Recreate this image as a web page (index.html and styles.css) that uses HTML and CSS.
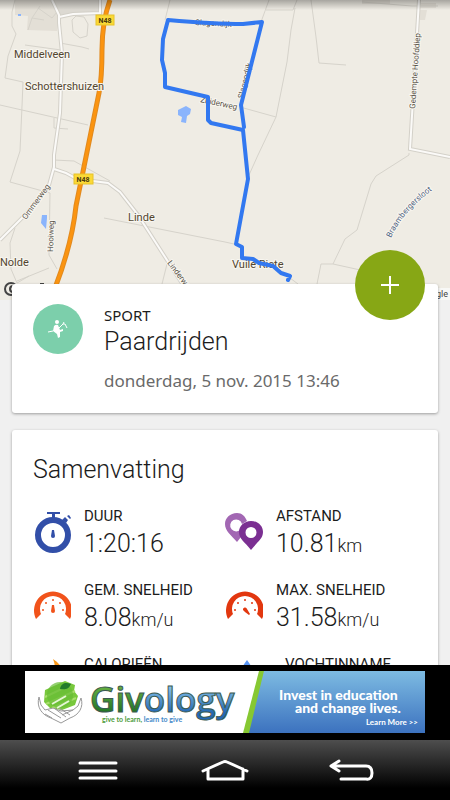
FILE: index.html
```html
<!DOCTYPE html>
<html lang="nl">
<head>
    <meta charset="UTF-8">
    <meta name="viewport" content="width=device-width, initial-scale=1.0">
    <title>Paardrijden</title>
    <link rel="stylesheet" href="styles.css">
</head>
<body>
    <main class="workout">
        <!-- Route map -->
        <div class="map">
            <svg viewBox="0 0 450 300" preserveAspectRatio="xMidYMid slice">
                <g fill="#e3dfd6">
                    <path d="M15 0h40l5 14-3 17-30-1 1-14-13-1z"/>
                    <path fill="#dcd9d2" d="M52 0h46l1 12-24 2-15 4z"/>
                    <path d="M362 0h28v4h-28zM420 3h16v5h-16zM420 10h7l-2 10h-5z"/>
                </g>
                <g fill="none" stroke="#d6d3cb" stroke-width="1">
                    <path d="M15 0l-3 12 0 14 4 8-8 22-3 22 18 4-1 24-2 45-10 31 40 11-1 62 8 14M0 105l22 5 66 15M54 118l0 10 14 1M60 43l22 4 7 2M25 45l36 5M54 160l20 1 36 20M17 281l32-13M15 228l-5 15 1 26 6 14 12-7"/>
                    <path d="M28 30l4-12 12 2M32 18l8-12M38 8l14 10 5-6M72 20l4-4 8 1 4 7-1 12-7 2-7-6z"/>
                    <path d="M170 0l-5 20M269 0l-8 22M297 0l-4 10-27 0M295 8l-4 22-4 32-11 55-18 38-9 20M240 107l36 10M311 0l5 37 3 26 27 2M362 2l50 4 26 0"/>
                    <path d="M409 153l0 2-33 21-5 8-14 46-12 9-12 25 32 7M333 264l-12 0-4 20M104 218l121 24 9 2M167 264l-5 20M290 278l8 6"/>
                </g>
                <g fill="none" stroke="#d3d0c8" stroke-width="4">
                    <path d="M52 0l7 15 0 8 3 30-2 60-6 42 0 12-5 18-22 28L0 240M59 17l14-3 27-1 0-13"/>
                    <path d="M54 169l12 4 11 6 31 4 12 9 18 23 45 70M419 0l-9 149 40 8"/>
                </g>
                <g fill="none" stroke="#fbfaf8" stroke-width="2">
                    <path d="M52 0l7 15 0 8 3 30-2 60-6 42 0 12-5 18-22 28L0 240M59 17l14-3 27-1 0-13"/>
                    <path d="M54 169l12 4 11 6 31 4 12 9 18 23 45 70M419 0l-9 149 40 8"/>
                </g>
                <path d="M110 0q-8 22-8 50t-3 43L76 206q-4 38-21 82" fill="none" stroke="#e08a20" stroke-width="5"/>
                <path d="M110 0q-8 22-8 50t-3 43L76 206q-4 38-21 82" fill="none" stroke="#fb9410" stroke-width="3"/>
                <g fill="#8ab4fc">
                    <path d="M178 110l8-4 5 3-1 5-3 2-1 7-5-1 1-5-4-2z"/>
                    <path d="M42 215l5 0 0 3-1 11-5-6zM18 14h3v2h-3z"/>
                </g>
                <g class="shield">
                    <rect x="96" y="15" width="18" height="10"/>
                    <text x="105" y="23">N48</text>
                    <rect x="74" y="174" width="19" height="10"/>
                    <text x="83" y="182">N48</text>
                </g>
                <g class="place">
                    <text x="14" y="58">Middelveen</text>
                    <text x="25" y="90">Schottershuizen</text>
                    <text x="128" y="221">Linde</text>
                    <text x="0" y="266">Nolde</text>
                    <text x="232" y="268">Vuile Riete</text>
                </g>
                <g class="street">
                    <text transform="translate(26 220) rotate(-54)">Ommerweg</text>
                    <text transform="translate(53 252) rotate(-88)">Hooiweg</text>
                    <text transform="translate(167 263) rotate(53)">Linderweg</text>
                    <text transform="translate(200 102) rotate(12)">Zuiderweg</text>
                    <text transform="translate(195 25) rotate(3)">Slagendijk</text>
                    <text transform="translate(243 99) rotate(-76)">Slagendijk</text>
                    <text transform="translate(415 109) rotate(-86)">Gedempte Hoofddiep</text>
                </g>
                <path id="sloot" d="M391 238Q402 212 435 188" fill="none"/>
                <text class="water"><textPath href="#sloot">Braambergersloot</textPath></text>
                <path class="route" d="M288 280l2-4-9-3-8-7-14-3-6-4-11-1 0-11-6-3 12-65-5-49-32-7-3-3 0-23-43-10 0-14-3-13 1-21 5-19q46 4 75 4l19-2-21 83 3 22"/>
                <g fill="none" stroke="#444" stroke-width="2">
                    <circle cx="11" cy="289" r="6"/>
                    <path d="M13 286a3 3 0 1 0 0 6M40 284h4"/>
                </g>
                <path d="M436 288h14v12h-14z" fill="#f8f8f6"/>
                <text class="credit" x="448" y="297">Google</text>
            </svg>
        </div>

        <section class="card sport-card">
            <button class="add-btn" aria-label="Toevoegen">
                <svg width="18" height="18" viewBox="0 0 18 18"><path d="M9 0v18M0 9h18" stroke="#fff" stroke-width="2"/></svg>
            </button>
            <div class="sport-icon">
                <svg width="22" height="20" viewBox="0 0 22 20">
                    <circle cx="10" cy="3" r="2" fill="#fff"/>
                    <path d="M7 7q2-2 4-1l2 5 3-1 0 2-3 1 0 5-2 1-1-4-4-3z" fill="#fff"/>
                    <path d="M1 13l5-1M12 9l4-4 2 0 2 4M16 5l1-2" fill="none" stroke="#fff"/>
                </svg>
            </div>
            <div class="sport-text">
                <div class="sport-label">SPORT</div>
                <h1>Paardrijden</h1>
                <div class="sport-date">donderdag, 5 nov. 2015 13:46</div>
            </div>
        </section>

        <section class="card summary">
            <h2>Samenvatting</h2>
            <div class="stats">
                <div class="stat">
                    <svg class="stat-icon" viewBox="0 0 38 42">
                        <circle cx="20" cy="24" r="15" fill="none" stroke="#324fa8" stroke-width="6"/>
                        <path d="M14 1h13v2h-5v4h-3v-4h-5zM29 9l3-3 3 3-2 3zM34 5l2-1 2 3-1 1z" fill="#324fa8"/>
                        <path d="M19 19h2l1 6a2 2 0 1 1-4 0z" fill="#324fa8"/>
                    </svg>
                    <div>
                        <div class="stat-label">DUUR</div>
                        <div class="stat-value">1:20:16</div>
                    </div>
                </div>
                <div class="stat">
                    <svg class="stat-icon" viewBox="0 0 38 42">
                        <path fill-rule="evenodd" d="M12 2C5 2 0 7 0 13c0 7 6 11 12 18l4-5V18a6 6 0 1 1 1-5l5-3C20 5 17 2 12 2z" fill="#a267b3"/>
                        <path fill-rule="evenodd" d="M26 10c-7 0-12 5-12 11 0 7 6 10 12 18 6-8 12-11 12-18 0-6-5-11-12-11zm0 6a5 5 0 1 1 0 11 5 5 0 0 1 0-11z" fill="#7b2f92"/>
                    </svg>
                    <div>
                        <div class="stat-label">AFSTAND</div>
                        <div class="stat-value">10.81<small>km</small></div>
                    </div>
                </div>
                <div class="stat">
                    <svg class="stat-icon" viewBox="0 0 38 42">
                        <path d="M3 34A19 19 0 1 1 37 34L32 29A13 13 0 1 0 8 29z" fill="#f1531b"/>
                        <g fill="#f1531b">
                            <circle cx="10" cy="25" r="1"/><circle cx="13" cy="18" r="1"/><circle cx="20" cy="15" r="1"/><circle cx="27" cy="18" r="1"/><circle cx="30" cy="25" r="1"/>
                            <path d="M19 20h2l1 6a2 2 0 1 1-4 0z"/>
                        </g>
                    </svg>
                    <div>
                        <div class="stat-label">GEM. SNELHEID</div>
                        <div class="stat-value">8.08<small>km/u</small></div>
                    </div>
                </div>
                <div class="stat">
                    <svg class="stat-icon" viewBox="0 0 38 42">
                        <path d="M3 34A19 19 0 1 1 37 34L32 29A13 13 0 1 0 8 29z" fill="#e2370f"/>
                        <g fill="#e2370f">
                            <circle cx="10" cy="25" r="1"/><circle cx="13" cy="18" r="1"/><circle cx="20" cy="15" r="1"/><circle cx="27" cy="18" r="1"/><circle cx="30" cy="25" r="1"/>
                            <path d="M18 25a2 2 0 0 1 4-1l3 5-1 1-4-3z"/>
                        </g>
                    </svg>
                    <div>
                        <div class="stat-label">MAX. SNELHEID</div>
                        <div class="stat-value">31.58<small>km/u</small></div>
                    </div>
                </div>
                <div class="stat">
                    <svg class="stat-icon" viewBox="0 0 38 42">
                        <path d="M20 0c9 6 13 14 13 24a13 13 0 0 1-26 0c0-6 4-9 7-12 1 3 3 4 5 4 3-4 4-9 1-16z" fill="#fb9a1c"/>
                    </svg>
                    <div>
                        <div class="stat-label">CALORIEËN</div>
                    </div>
                </div>
                <div class="stat stat-wide-gap">
                    <svg class="stat-icon" viewBox="0 0 38 42">
                        <path d="M22 1c7 10 12 17 12 25a12 12 0 0 1-24 0c0-8 5-15 12-25z" fill="#5a96f5"/>
                    </svg>
                    <div>
                        <div class="stat-label">VOCHTINNAME</div>
                    </div>
                </div>
            </div>
        </section>
    </main>

    <aside class="ad">
        <a class="banner" href="#">
            <svg class="banner-logo" viewBox="0 0 218 62">
                <defs>
                    <linearGradient id="green" x1="0" y1="0" x2="0" y2="1">
                        <stop offset="0.2" stop-color="#6cb544"/>
                        <stop offset="0.8" stop-color="#1f7424"/>
                    </linearGradient>
                    <linearGradient id="blue" x1="0" y1="0" x2="0" y2="1">
                        <stop offset="0.2" stop-color="#8cc8ee"/>
                        <stop offset="0.8" stop-color="#2468b4"/>
                    </linearGradient>
                </defs>
                <path d="M20 19l20-9 5 2 5 2-1 6 4 5-3 9-13 5-12-2-6-6z" fill="#78c83c"/>
                <path d="M20 26l25-12M21 33l29-13M27 37l24-10" stroke="#a8de6c" stroke-width="2"/>
                <circle cx="35" cy="24" r="13" fill="#66bc35" opacity="0.7"/>
                <path d="M35 18c1-6 6-7 11-5-2 5-6 6-11 5l-3-3" fill="#237b2b"/>
                <path d="M27 33l14-8M32 37l12-7" stroke="#e5f6d5" stroke-width="2"/>
                <g fill="#fff" stroke="#999" stroke-width="1">
                    <path d="M14 26c-3 10 3 18 12 21l10 5 9-5c9-3 14-11 11-20l-3 8-5 4-12 1-8-3-8 2-4-5z"/>
                    <path d="M23 39l13 8M29 37l12 9M34 37l11 7M20 43l7 4M37 44l11-5" fill="none"/>
                </g>
                <text class="logo-text" x="65" y="41"><tspan fill="url(#green)">Giv</tspan><tspan fill="url(#blue)">ology</tspan></text>
                <text class="logo-tag" x="77" y="51"><tspan fill="#4d9b3a">give to learn,</tspan><tspan fill="#4488c8"> learn to give</tspan></text>
            </svg>
            <div class="banner-edge">
                <div class="banner-cta">
                    <span>Invest in education</span>
                    <span class="cta-second">and change lives.</span>
                    <span class="cta-more">Learn More &gt;&gt;</span>
                </div>
            </div>
        </a>
    </aside>

    <nav class="navbar">
        <button aria-label="Menu">
            <svg width="50" height="26" viewBox="0 0 50 26"><path d="M6 5h36M6 13h36M6 20h36"/></svg>
        </button>
        <button aria-label="Start">
            <svg width="50" height="26" viewBox="0 0 50 26"><path d="M3 13l20-9q2-1 4 0l20 9M8 11v10h35v-10"/></svg>
        </button>
        <button aria-label="Terug">
            <svg width="50" height="26" viewBox="0 0 50 26"><path d="M13 3L5 8l8 5M6 8h34q6 0 6 7t-6 6H15"/></svg>
        </button>
    </nav>
</body>
</html>
```
FILE: styles.css
```css
* {
    box-sizing: border-box;
}

body {
    margin: 0;
    height: 100vh;
    display: flex;
    flex-direction: column;
    font-family: Roboto, sans-serif;
    color: #1c1c1c;
    background-color: #f0f0f0;
}

h1, h2 {
    margin: 0;
    font-size: 25px;
    line-height: 32px;
    font-weight: 300;
}

button {
    border: none;
    padding: 0;
    cursor: pointer;
}

.workout {
    flex: 1;
    min-height: 0;
    overflow: hidden;
}

/* Map */
.map {
    position: relative;
    height: 300px;
    background-color: #efece4;
}

.map svg {
    display: block;
    width: 100%;
    height: 100%;
}

.map::after {
    content: "";
    position: absolute;
    top: 0;
    left: 0;
    right: 0;
    height: 10px;
    background: linear-gradient(rgba(0, 0, 0, 0.3), rgba(0, 0, 0, 0));
}

.shield rect {
    fill: #fbd936;
    stroke: #e6c22a;
}

.shield text {
    font-size: 7px;
    font-weight: 700;
    text-anchor: middle;
    fill: #4a3a10;
}

.place, .street, .water {
    paint-order: stroke;
    stroke: #f8f6f0;
    stroke-width: 2px;
}

.place {
    font-size: 11px;
    fill: #52452f;
}

.street {
    font-size: 8px;
    fill: #5a544a;
}

.water {
    font-size: 8px;
    fill: #4c6080;
}

.credit {
    font-size: 9px;
    text-anchor: end;
    fill: #444;
}

.route {
    fill: none;
    stroke: #3278f0;
    stroke-width: 4px;
    stroke-linejoin: round;
    stroke-linecap: round;
}

/* Cards */
.card {
    position: relative;
    margin: 0 12px 17px;
    background-color: #fff;
    border-radius: 3px;
    box-shadow: 0 1px 3px rgba(0, 0, 0, 0.35);
}

.sport-card {
    display: flex;
    gap: 21px;
    margin-top: -16px;
    padding: 20px 21px;
}

.add-btn {
    position: absolute;
    top: -34px;
    right: 13px;
    width: 70px;
    height: 70px;
    display: flex;
    align-items: center;
    justify-content: center;
    border-radius: 50%;
    background-color: #87a715;
}

.sport-icon {
    width: 50px;
    height: 50px;
    display: flex;
    align-items: center;
    justify-content: center;
    border-radius: 50%;
    background-color: #7ccfab;
}

.sport-label {
    font-family: "Noto Sans", sans-serif;
    font-size: 15px;
    line-height: 22px;
}

.sport-date {
    margin-top: 11px;
    font-family: "Noto Sans", sans-serif;
    font-size: 17px;
    line-height: 24px;
    color: #6a6a6a;
}

.summary {
    padding: 24px 21px;
}

.stats {
    display: grid;
    grid-template-columns: 1fr 1fr;
    margin-top: 20px;
}

.stat {
    display: flex;
    gap: 13px;
    height: 74px;
}

.stat-icon {
    width: 38px;
    height: 42px;
    margin-top: 5px;
}

.stat-wide-gap {
    gap: 22px;
}

.stat-label {
    font-size: 15px;
    line-height: 20px;
}

.stat-value {
    margin-top: 3px;
    font-size: 25px;
    line-height: 30px;
    font-weight: 300;
}

.stat-value small {
    font-size: 18px;
}

/* Advertisement */
.ad {
    display: flex;
    justify-content: center;
    padding: 6px 25px 7px;
    background-color: #000;
}

.banner {
    display: flex;
    width: 400px;
    height: 62px;
    background-color: #fff;
    color: #fff;
    text-decoration: none;
}

.banner-logo {
    width: 218px;
    height: 62px;
}

.logo-text {
    font-family: "Open Sans", sans-serif;
    font-size: 35px;
    font-weight: 600;
    stroke: #3c5a50;
    stroke-width: 1px;
}

.logo-tag {
    font-family: Lato, sans-serif;
    font-size: 7px;
    font-weight: 700;
}

.banner-edge {
    flex: 1;
    padding-left: 6px;
    background-color: #86c832;
    clip-path: polygon(16px 0, 100% 0, 100% 100%, 0 100%);
}

.banner-cta {
    display: flex;
    flex-direction: column;
    height: 100%;
    padding: 17px 7px 0 30px;
    font-family: Lato, sans-serif;
    font-size: 14px;
    line-height: 13px;
    font-weight: 900;
    white-space: nowrap;
    background: linear-gradient(#7dbbe2, #3c72bf);
    clip-path: polygon(15px 0, 100% 0, 100% 100%, 0 100%);
}

.cta-second {
    padding-left: 16px;
}

.cta-more {
    margin-top: 2px;
    font-size: 8px;
    font-weight: 700;
    text-align: right;
}

/* Android buttons */
.navbar {
    display: flex;
    justify-content: center;
    gap: 76px;
    height: 60px;
    padding-top: 18px;
    background: linear-gradient(#4e4e4e, #000 80%);
}

.navbar button {
    width: 50px;
    height: 26px;
    background: none;
}

.navbar svg {
    display: block;
    fill: none;
    stroke: #fff;
    stroke-width: 3px;
    stroke-linecap: round;
    stroke-linejoin: round;
}
```
